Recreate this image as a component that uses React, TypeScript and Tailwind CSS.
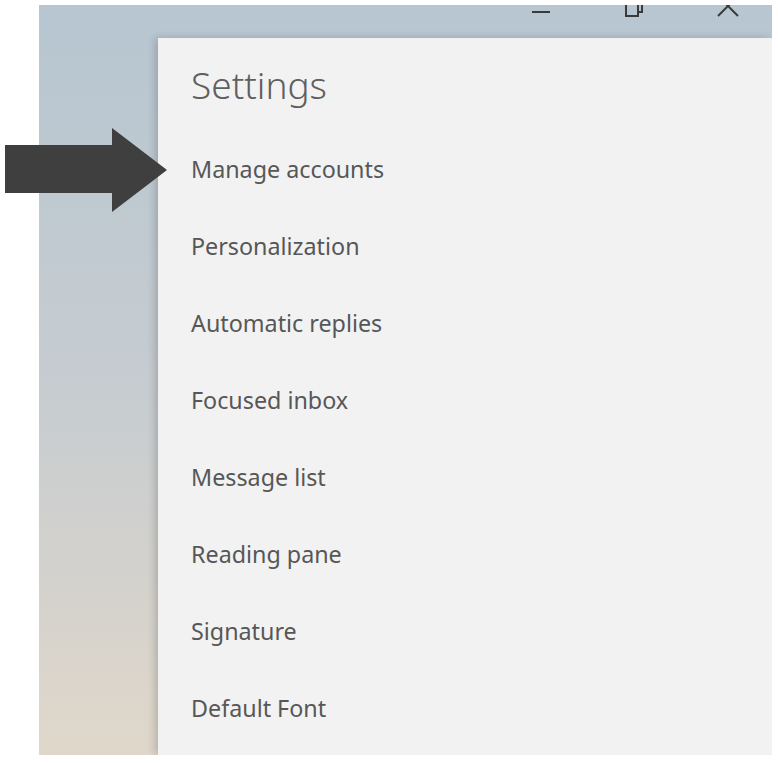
import React from 'react';

const items = [
  'Manage accounts',
  'Personalization',
  'Automatic replies',
  'Focused inbox',
  'Message list',
  'Reading pane',
  'Signature',
  'Default Font',
];

function WindowControls() {
  return (
    <div className="flex justify-end items-start h-[38px] -mt-[5px] pr-[32px] gap-[70px]">
      <svg width="22" height="20" viewBox="0 0 22 20">
        <line x1="2" y1="12" x2="20" y2="12" stroke="#3a3a3a" strokeWidth="2" />
      </svg>
      <svg width="24" height="20" viewBox="0 0 24 20">
        <path d="M4 4 H16 V16 H4 Z" fill="none" stroke="#3a3a3a" strokeWidth="2" />
        <path d="M8 0 V-2 H20 V12 H16" fill="none" stroke="#3a3a3a" strokeWidth="2" />
      </svg>
      <svg width="24" height="20" viewBox="0 0 24 20">
        <path d="M2 -4 L22 16 M22 -4 L2 16" fill="none" stroke="#3a3a3a" strokeWidth="2" />
      </svg>
    </div>
  );
}

export default function App() {
  return (
    <div className="relative w-[778px] h-[763px] bg-white overflow-hidden font-['Noto_Sans',sans-serif]">
      <div className="ml-[39px] mt-[5px] w-[733px] h-[750px] overflow-hidden flex flex-col bg-gradient-to-b from-[#b7c6d1] via-[#c6ccd0] to-[#e0d7ca]">
        <WindowControls />
        <div className="flex flex-1">
          <div className="w-[119px] shrink-0" />
          <div className="flex-1 bg-[#f2f2f2] shadow-[-3px_0_8px_rgba(0,0,0,0.18)] pl-[33px]">
            <h1 className="pt-[23px] h-[70px] mb-[23px] text-[37px] leading-[48px] font-light text-[#5f5f5f]">
              Settings
            </h1>
            <ul>
              {items.map((item) => (
                <li key={item} className="h-[77px] leading-[77px] text-[23.3px] text-[#575757]">
                  {item}
                </li>
              ))}
            </ul>
          </div>
        </div>
      </div>
      <svg
        className="absolute left-[5px] top-[128px]"
        width="162"
        height="84"
        viewBox="0 0 162 84"
      >
        <path d="M0 17 H107 V0 L162 42 L107 84 V65 H0 Z" fill="#3f3f3f" />
      </svg>
    </div>
  );
}
